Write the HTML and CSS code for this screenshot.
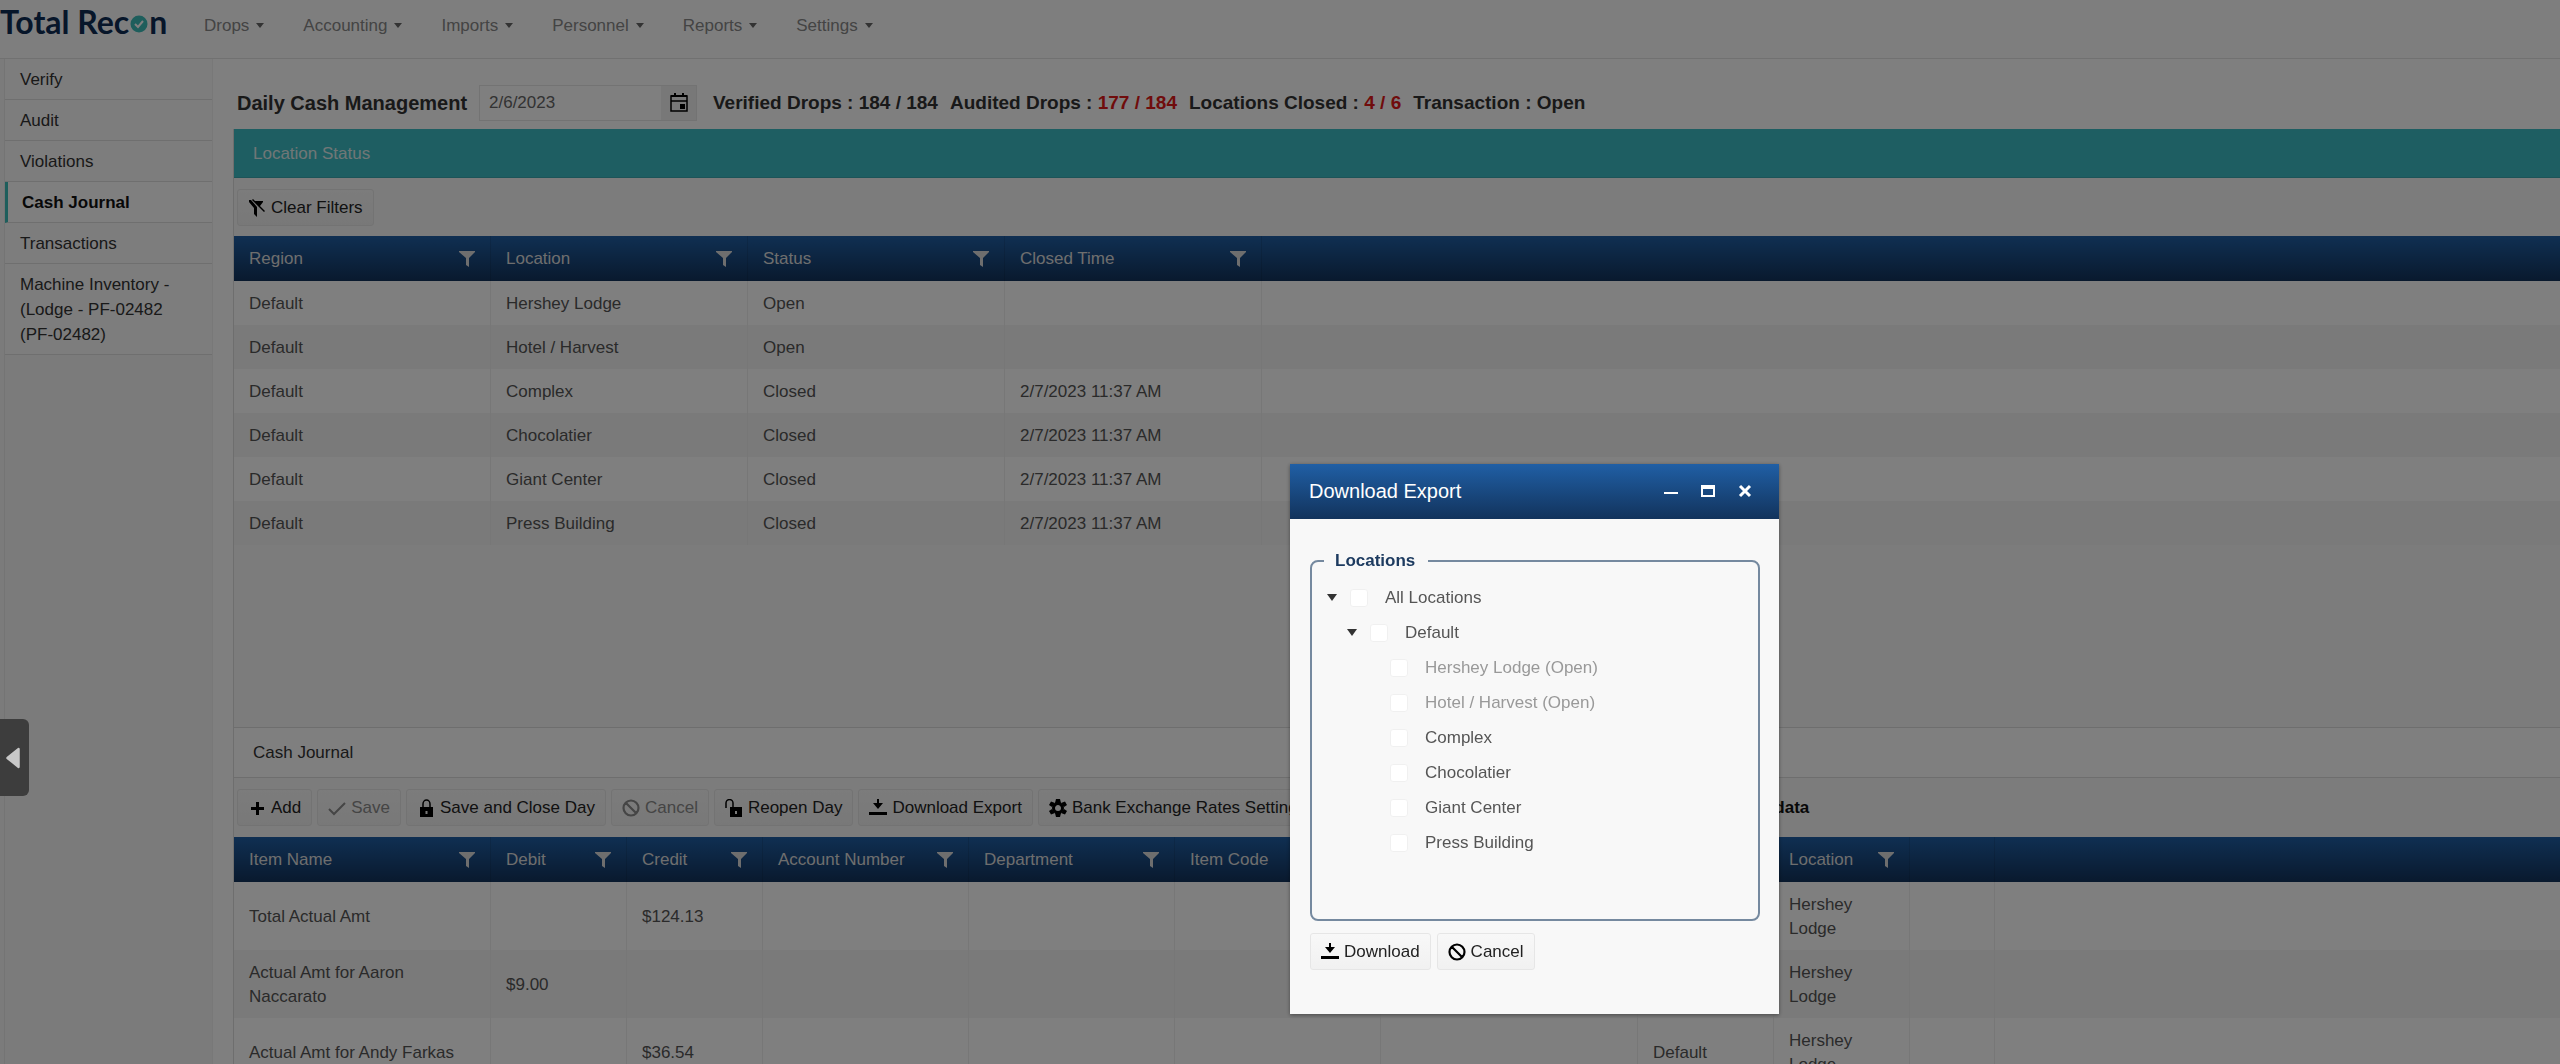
FILE: index.html
```html
<!DOCTYPE html>
<html lang="en">
<head>
<meta charset="utf-8">
<title>Total Recon</title>
<link rel="stylesheet" href="styles.css">
</head>
<body>
<!-- icons used more than once -->
<svg class="sprite">
<symbol id="filter" viewBox="0 0 16 16"><path d="M0 0h16v1l-6 6v9l-3-2V7L0 1z"/></symbol>
<symbol id="download" viewBox="0 0 18 18"><path d="M8 0h2v4h4l-5 6-5-6h4zM0 13h18v3H0z"/></symbol>
<symbol id="cancel" viewBox="0 0 18 18"><path d="M9 1.500a7.500 7.500 0 1 0 0 15 7.500 7.500 0 0 0 0-15zM4 4l10 10" fill="none" stroke="currentColor" stroke-width="2.200"/></symbol>
</svg>

<header class="navbar">
<a href="#" class="logo">Total Rec<svg viewBox="0 0 18 18"><circle cx="9" cy="9" r="8.500"/><path d="M5 9l3 3 5-6"/></svg>n</a>
<nav>
<a href="#">Drops</a>
<a href="#">Accounting</a>
<a href="#">Imports</a>
<a href="#">Personnel</a>
<a href="#">Reports</a>
<a href="#">Settings</a>
</nav>
</header>

<div class="layout">
<aside class="sidebar">
<a href="#">Verify</a>
<a href="#">Audit</a>
<a href="#">Violations</a>
<a href="#" class="active">Cash Journal</a>
<a href="#">Transactions</a>
<a href="#">Machine Inventory - (Lodge - PF-02482 (PF-02482)</a>
</aside>

<main class="content">
<div class="summary">
<label for="day">Daily Cash Management</label>
<div class="datepicker">
<input type="text" id="day" value="2/6/2023">
<button aria-label="Open calendar"><svg viewBox="0 0 18 20"><path d="M1 3h16v15H1zM1 8h16" fill="none" stroke="currentColor" stroke-width="1.500"/><path d="M4 0h2v4H4zM12 0h2v4h-2zM10 11h5v5h-5zM1 2h16v2H1z"/></svg></button>
</div>
<span>Verified Drops : 184 / 184</span>
<span>Audited Drops : <em>177 / 184</em></span>
<span>Locations Closed : <em>4 / 6</em></span>
<span>Transaction : Open</span>
</div>

<section class="panel status">
<h2 class="teal">Location Status</h2>
<div class="toolbar">
<button><svg viewBox="0 0 18 18"><path d="M1 1h2l6 7v10l-3-3V9L1 3zM7 2h8v1l-3 4zM5 0l12 12-1 1L4 1z"/></svg>Clear Filters</button>
</div>
<table>
<colgroup><col class="w257"><col class="w257"><col class="w257"><col class="w257"><col></colgroup>
<thead>
<tr>
<th><div>Region<svg><use href="#filter"/></svg></div></th>
<th><div>Location<svg><use href="#filter"/></svg></div></th>
<th><div>Status<svg><use href="#filter"/></svg></div></th>
<th><div>Closed Time<svg><use href="#filter"/></svg></div></th>
<th></th>
</tr>
</thead>
<tbody>
<tr><td>Default</td><td>Hershey Lodge</td><td>Open</td><td></td><td></td></tr>
<tr><td>Default</td><td>Hotel / Harvest</td><td>Open</td><td></td><td></td></tr>
<tr><td>Default</td><td>Complex</td><td>Closed</td><td>2/7/2023 11:37 AM</td><td></td></tr>
<tr><td>Default</td><td>Chocolatier</td><td>Closed</td><td>2/7/2023 11:37 AM</td><td></td></tr>
<tr><td>Default</td><td>Giant Center</td><td>Closed</td><td>2/7/2023 11:37 AM</td><td></td></tr>
<tr><td>Default</td><td>Press Building</td><td>Closed</td><td>2/7/2023 11:37 AM</td><td></td></tr>
</tbody>
</table>
</section>

<section class="panel journal">
<h2>Cash Journal</h2>
<div class="toolbar">
<button><svg viewBox="0 0 18 18"><path d="M8 3h3v5h5v3h-5v5H8v-5H3V8h5z"/></svg>Add</button>
<button disabled><svg viewBox="0 0 18 18"><path d="M1 10l5 5L17 4" fill="none" stroke="currentColor" stroke-width="2"/></svg>Save</button>
<button><svg viewBox="0 0 18 18"><path d="M6 9V5a3.500 4 0 0 1 7 0v4" fill="none" stroke="currentColor" stroke-width="1.500"/><path d="M3 8h13v10H3zm5.500 4v3h2v-3z" fill-rule="evenodd"/></svg>Save and Close Day</button>
<button disabled><svg><use href="#cancel"/></svg>Cancel</button>
<button><svg viewBox="0 0 18 18"><path d="M1 9V4a3.500 3.500 0 0 1 7 0v4" fill="none" stroke="currentColor" stroke-width="1.500"/><path d="M5 8h12v10H5zm5 4v3h2v-3z" fill-rule="evenodd"/></svg>Reopen Day</button>
<button><svg><use href="#download"/></svg>Download Export</button>
<button><svg viewBox="0 0 18 18"><path d="M9 4.500a4.500 4.500 0 1 0 0 9 4.500 4.500 0 0 0 0-9z" fill="none" stroke="currentColor" stroke-width="3"/><path d="M7 0h4l1 4H6zM7 18h4l1-4H6zM0 6l2-3.500 4 1.500-3 4zM18 6l-2-3.500L12 4l3 4zM0 12l2 3.500L6 14l-3-4zM18 12l-2 3.500-4-1.500 3-4z"/></svg>Bank Exchange Rates Settings</button>
<strong>data</strong>
</div>
<table>
<colgroup><col class="w257"><col class="w137"><col class="w137"><col class="w205"><col class="w205"><col class="w205"><col class="w257"><col class="w137"><col class="w137"><col class="w85"><col></colgroup>
<thead>
<tr>
<th><div>Item Name<svg><use href="#filter"/></svg></div></th>
<th><div>Debit<svg><use href="#filter"/></svg></div></th>
<th><div>Credit<svg><use href="#filter"/></svg></div></th>
<th><div>Account Number<svg><use href="#filter"/></svg></div></th>
<th><div>Department<svg><use href="#filter"/></svg></div></th>
<th><div>Item Code</div></th>
<th></th>
<th></th>
<th><div>Location<svg><use href="#filter"/></svg></div></th>
<th></th>
<th></th>
</tr>
</thead>
<tbody>
<tr><td>Total Actual Amt</td><td></td><td>$124.13</td><td></td><td></td><td></td><td></td><td></td><td>Hershey Lodge</td><td></td><td></td></tr>
<tr><td>Actual Amt for Aaron Naccarato</td><td>$9.00</td><td></td><td></td><td></td><td></td><td></td><td></td><td>Hershey Lodge</td><td></td><td></td></tr>
<tr><td>Actual Amt for Andy Farkas</td><td></td><td>$36.54</td><td></td><td></td><td></td><td></td><td>Default</td><td>Hershey Lodge</td><td></td><td></td></tr>
</tbody>
</table>
</section>
</main>
</div>

<div class="overlay"></div>
<button class="drawer" aria-label="Show panel"><svg viewBox="0 0 16 20"><path d="M13 2v16L3 10z"/></svg></button>

<div class="window" role="dialog" aria-labelledby="window-title">
<div class="titlebar">
<h1 id="window-title">Download Export</h1>
<button aria-label="Minimize"><svg viewBox="0 0 14 14"><path d="M0 8h14v2H0z"/></svg></button>
<button aria-label="Maximize"><svg viewBox="0 0 14 14"><path d="M0 1h14v12H0zm2 4v6h10V5z" fill-rule="evenodd"/></svg></button>
<button aria-label="Close"><svg viewBox="0 0 14 14"><path d="M2 2l10 10M12 2L2 12" stroke="currentColor" stroke-width="3"/></svg></button>
</div>
<form class="window-body">
<fieldset>
<legend>Locations</legend>
<ul class="tree">
<li><i></i><label><input type="checkbox">All Locations</label>
<ul>
<li><i></i><label><input type="checkbox">Default</label>
<ul>
<li><label class="off"><input type="checkbox" disabled>Hershey Lodge (Open)</label></li>
<li><label class="off"><input type="checkbox" disabled>Hotel / Harvest (Open)</label></li>
<li><label><input type="checkbox">Complex</label></li>
<li><label><input type="checkbox">Chocolatier</label></li>
<li><label><input type="checkbox">Giant Center</label></li>
<li><label><input type="checkbox">Press Building</label></li>
</ul>
</li>
</ul>
</li>
</ul>
</fieldset>
<button type="button"><svg><use href="#download"/></svg>Download</button>
<button type="button"><svg><use href="#cancel"/></svg>Cancel</button>
</form>
</div>
</body>
</html>
```
FILE: styles.css
```css
* {
box-sizing: border-box;
}

body {
margin: 0;
height: 100vh;
overflow: hidden;
background: #f6f6f6;
color: #555;
font: 17px/24px "Liberation Sans", Arial, sans-serif;
}

a {
color: inherit;
text-decoration: none;
}

svg {
fill: currentColor;
}

.sprite {
display: none;
}

.navbar {
display: flex;
align-items: center;
height: 58px;
padding-bottom: 7px;
background: #fdfdfd;
}

.logo {
display: flex;
align-items: center;
width: 204px;
padding-bottom: 8px;
color: #0f2d55;
font: bold 32px/40px Lato, sans-serif;
}

.logo svg {
width: 18px;
height: 18px;
margin: 5px 1px 0;
fill: #3cbcb8;
}

.logo path {
fill: none;
stroke: #fff;
stroke-width: 2;
}

.navbar nav {
display: flex;
gap: 39px;
color: #888;
}

.navbar nav a::after {
content: "";
display: inline-block;
margin-left: 7px;
border: 4px solid transparent;
border-top: 5px solid #666;
border-bottom: 0;
vertical-align: 3px;
}

.layout {
display: flex;
height: 100%;
padding-left: 4px;
border-top: 1px solid #e2e2e2;
}

.sidebar {
width: 208px;
flex: none;
border-left: 1px solid #e8e8e8;
}

.sidebar a {
display: block;
padding: 8px 20px 7px 15px;
border-bottom: 1px solid #dedede;
background: #fafafa;
color: #333;
line-height: 25px;
}

.sidebar .active {
padding-left: 14px;
border-left: 3px solid #3cbcb8;
background: #fff;
color: #111;
font-weight: bold;
}

.content {
flex: 1;
padding: 26px 0 0 20px;
border-left: 1px solid #f0f0f0;
background: #fff;
}

.summary {
display: flex;
align-items: center;
gap: 12px;
height: 44px;
padding: 0 0 8px 4px;
color: #333;
font-size: 19px;
font-weight: bold;
}

.summary label {
width: 242px;
font-size: 20px;
}

.summary em {
color: #e01818;
font-style: normal;
}

.datepicker {
display: flex;
width: 218px;
height: 36px;
margin: 0 4px 0 -12px;
border: 1px solid #e6e6e6;
}

.datepicker input {
flex: 1;
min-width: 0;
padding: 0 9px;
border: 0;
color: #666;
font: inherit;
font-size: 17px;
font-weight: normal;
}

.datepicker button {
width: 35px;
padding: 0;
border: 0;
background: #f0f0f0;
}

.datepicker svg {
width: 18px;
height: 20px;
vertical-align: middle;
}

.panel {
border: 1px solid #ddd;
border-width: 0 0 1px 1px;
background: #f8f8f8;
}

.status {
height: 599px;
}

h2 {
margin: 0;
padding: 13px 19px 12px;
border-bottom: 1px solid #ddd;
background: #fff;
color: #333;
font-size: 17px;
font-weight: normal;
line-height: 24px;
}

.teal {
padding-bottom: 11px;
border-color: #3aa9b0;
background: #3cbcc4;
color: #e0eeee;
}

.toolbar {
display: flex;
align-items: center;
gap: 5px;
padding: 11px 3px;
}

.status .toolbar {
padding-bottom: 10px;
}

.toolbar button, .window-body button {
display: flex;
align-items: center;
gap: 5px;
height: 37px;
padding: 0 10px;
border: 1px solid #e6e6e6;
border-radius: 3px;
background: linear-gradient(#f8f8f8, #f1f1f1);
color: #222;
font: inherit;
white-space: nowrap;
}

.toolbar button svg, .window-body button svg {
width: 18px;
height: 18px;
color: #000;
}

.toolbar button:disabled, .toolbar button:disabled svg {
color: #8a8a8a;
}

.toolbar strong {
width: 487px;
color: #111;
text-align: right;
}

table {
width: 100%;
table-layout: fixed;
border-collapse: separate;
border-spacing: 0;
background: #fff;
}

.w257 {
width: 257px;
}

.w205 {
width: 206px;
}

.w137 {
width: 136px;
}

.w85 {
width: 85px;
}

thead tr {
height: 45px;
background: linear-gradient(#205fa5, #12335c);
}

th {
padding: 0 15px;
border-right: 1px solid rgba(0, 0, 0, .1);
color: #ddd;
font-weight: normal;
text-align: left;
}

th div {
display: flex;
align-items: center;
justify-content: space-between;
}

th svg {
width: 16px;
height: 16px;
}

td {
padding: 11px 15px 9px;
border-right: 1px solid #eee;
}

th:last-child, td:last-child {
border-right: 0;
}

.journal td {
height: 68px;
}

tbody tr:nth-child(even) {
background: #f4f4f4;
}

.overlay {
position: fixed;
inset: 0;
background: rgba(0, 0, 0, .5);
}

.drawer {
position: fixed;
top: 719px;
left: 0;
width: 29px;
height: 77px;
padding: 0;
border: 0;
border-radius: 0 6px 6px 0;
background: #3d3d3d;
color: #c8c8c8;
}

.drawer svg {
width: 18px;
height: 26px;
margin-right: 3px;
stroke: currentColor;
stroke-width: 2;
stroke-linejoin: round;
vertical-align: middle;
}

.window {
position: fixed;
top: 464px;
left: 1290px;
width: 489px;
background: #f8f8f8;
box-shadow: 0 1px 4px rgba(0, 0, 0, .4);
}

.titlebar {
display: flex;
align-items: center;
gap: 23px;
height: 55px;
padding: 0 27px 2px 19px;
background: linear-gradient(#205fa5, #12335c);
color: #fff;
}

.titlebar h1 {
flex: 1;
margin: 0;
font-size: 20px;
font-weight: normal;
}

.titlebar button {
padding: 0;
border: 0;
background: none;
color: #fff;
line-height: 0;
}

.titlebar svg {
width: 14px;
height: 14px;
}

.window-body {
display: flex;
flex-wrap: wrap;
gap: 12px 6px;
padding: 30px 19px 44px 20px;
}

fieldset {
width: 100%;
height: 372px;
margin: 0;
padding: 7px 12px;
border: 2px solid #75899f;
border-radius: 8px;
}

legend {
padding: 0 13px 0 11px;
color: #1d3b60;
font-weight: bold;
}

.tree, .tree ul {
margin: 0;
padding: 0;
list-style: none;
}

.tree ul {
padding-left: 20px;
}

.tree i {
float: left;
margin: 14px 0 0 3px;
border: 5px solid transparent;
border-top: 7px solid #333;
border-bottom: 0;
}

.tree label {
display: flex;
align-items: center;
gap: 17px;
height: 35px;
padding-left: 26px;
}

.tree i + label {
padding-left: 13px;
}

.tree input {
appearance: none;
width: 18px;
height: 18px;
margin: 0;
border: 1px solid #f0f0f0;
border-radius: 3px;
background: #fff;
}

.tree .off {
color: #999;
}
```
